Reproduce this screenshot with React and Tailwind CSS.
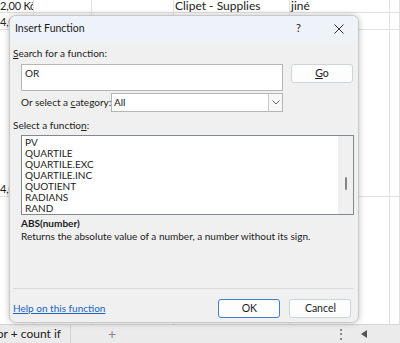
import React from "react";

const font = { fontFamily: 'Lato, "Noto Sans", sans-serif' };

const cols = [34, 58, 82, 116, 100, 10];

// Excel rows: text sits at the bottom of each cell
const rows = [
  { h: "h-[13px]", cells: ["2,00 Kč", "", "", "Clipet - Supplies", "jiné", ""] },
  { h: "h-[17px]", cells: ["4,00 Kč", "", "", "", "", ""] },
  { h: "h-[167px]", cells: ["4,00 Kč", "", "", "", "", ""] },
  { h: "h-[200px]", cells: ["", "", "", "", "", ""] },
];

const functions = ["PV", "QUARTILE", "QUARTILE.EXC", "QUARTILE.INC", "QUOTIENT", "RADIANS", "RAND"];

const Sheet = () => (
  <div className="flex-1 overflow-hidden bg-white">
    {rows.map((row, r) => (
      <div key={r} className={`flex ${row.h}`}>
        {cols.map((w, c) => (
          <div
            key={c}
            style={{ width: w }}
            className={`shrink-0 border-r border-b border-[#e1e1e1] leading-[12px] text-[#222] whitespace-nowrap flex items-end ${
              c === 0 ? "text-[11px] tracking-[-0.2px] overflow-hidden" : "text-[12px] pl-[1px]"
            } ${r === 0 ? "" : "pb-[1px]"}`}
          >
            {row.cells[c]}
          </div>
        ))}
      </div>
    ))}
  </div>
);

const Button = ({ children, focused }) => (
  <button
    className={`w-[62px] h-[19px] rounded-[3px] bg-[#fdfdfd] text-[10.5px] leading-none text-[#1b1b1b] ${
      focused ? "border border-[#3c7fd0]" : "border border-[#cfd4da]"
    }`}
  >
    {children}
  </button>
);

const Dialog = () => (
  <div className="absolute left-[9px] top-[15px] w-[350px] h-[308px] rounded-[7px] overflow-hidden border border-[#c8c8c8] bg-[#f0f0f0] shadow-[0_0_6px_rgba(0,0,0,0.25)] text-[10px] text-[#1b1b1b] whitespace-nowrap">
    <div className="h-[25px] bg-[#eef2f9] flex items-center pl-[5px] pr-[14px]">
      <span className="text-[10.5px]">Insert Function</span>
      <span className="ml-auto mr-[33px] text-[11px]">?</span>
      <svg width="10" height="10" viewBox="0 0 10 10">
        <path d="M0.5 0.5 L9.5 9.5 M9.5 0.5 L0.5 9.5" stroke="#333" strokeWidth="1" />
      </svg>
    </div>
    <div className="pl-[3px] pt-[5px]">
      <div className="h-[14px] leading-[14px]">
        <u>S</u>earch for a function:
      </div>
      <div className="flex mt-[4px] pl-[8px]">
        <div className="w-[262px] h-[27px] bg-white border border-[#b5b5b5] px-[3px] pt-[1px] leading-[14px]">OR</div>
        <div className="ml-[8px]">
          <Button>
            <u>G</u>o
          </Button>
        </div>
      </div>
      <div className="flex items-center mt-[2px] pl-[8px] h-[19px]">
        <span className="w-[90px] shrink-0">
          Or select a <u>c</u>ategory:
        </span>
        <div className="w-[172px] h-[19px] bg-white border border-[#b5b5b5] flex items-center">
          <span className="pl-[2px] flex-1">All</span>
          <div className="w-[14px] h-full border-l border-[#c8c8c8] bg-[#f7f7f7] flex items-center justify-center">
            <svg width="8" height="5" viewBox="0 0 8 5">
              <path d="M0.5 0.5 L4 4 L7.5 0.5" fill="none" stroke="#666" strokeWidth="1" />
            </svg>
          </div>
        </div>
      </div>
      <div className="mt-[6px] h-[14px] leading-[14px]">
        Select a functio<u>n</u>:
      </div>
      <div className="ml-[8px] mt-[3px] w-[333px] h-[80px] bg-white border border-[#828790] flex">
        <div className="flex-1 pl-[3px] pt-[1px]">
          {functions.map((f) => (
            <div key={f} className="h-[11px] leading-[11px] text-[10px]">
              {f}
            </div>
          ))}
        </div>
        <div className="w-[15px] bg-[#f0f0f0] flex justify-center pt-[41px]">
          <div className="w-[2px] h-[13px] bg-[#858585] rounded-full" />
        </div>
      </div>
      <div className="ml-[8px] mt-[1px] font-bold h-[14px] leading-[14px]">ABS(number)</div>
      <div className="ml-[8px] -mt-[1px] h-[14px] leading-[14px]">Returns the absolute value of a number, a number without its sign.</div>
      <div className="mt-[45px] h-px bg-[#d9d9d9] w-[340px]" />
      <div className="flex items-center mt-[10px] h-[19px]">
        <span className="text-[#1a63c7] underline">Help on this function</span>
        <div className="ml-[113px] flex gap-[9px]">
          <Button focused>OK</Button>
          <Button>Cancel</Button>
        </div>
      </div>
    </div>
  </div>
);

const App = () => (
  <div style={font} className="relative w-[400px] h-[343px] overflow-hidden bg-white flex flex-col">
    <Sheet />
    <div className="h-[19px] shrink-0 bg-[#ebebeb] flex items-center text-[12px] text-[#222] border-t border-[#d6d6d6]">
      <div className="w-[71px] h-full border-r border-[#cfcfcf] flex items-center whitespace-nowrap overflow-hidden justify-end pr-[9px]">
        or + count if
      </div>
      <span className="ml-[37px] text-[#888] text-[14px] leading-none">+</span>
      <span className="ml-auto mr-[14px] text-[#555] text-[12px]">⋮</span>
      <svg width="6" height="8" viewBox="0 0 6 8" className="mr-[33px]">
        <path d="M6 0 L0 4 L6 8 Z" fill="#555" />
      </svg>
    </div>
    <Dialog />
  </div>
);

export default App;
